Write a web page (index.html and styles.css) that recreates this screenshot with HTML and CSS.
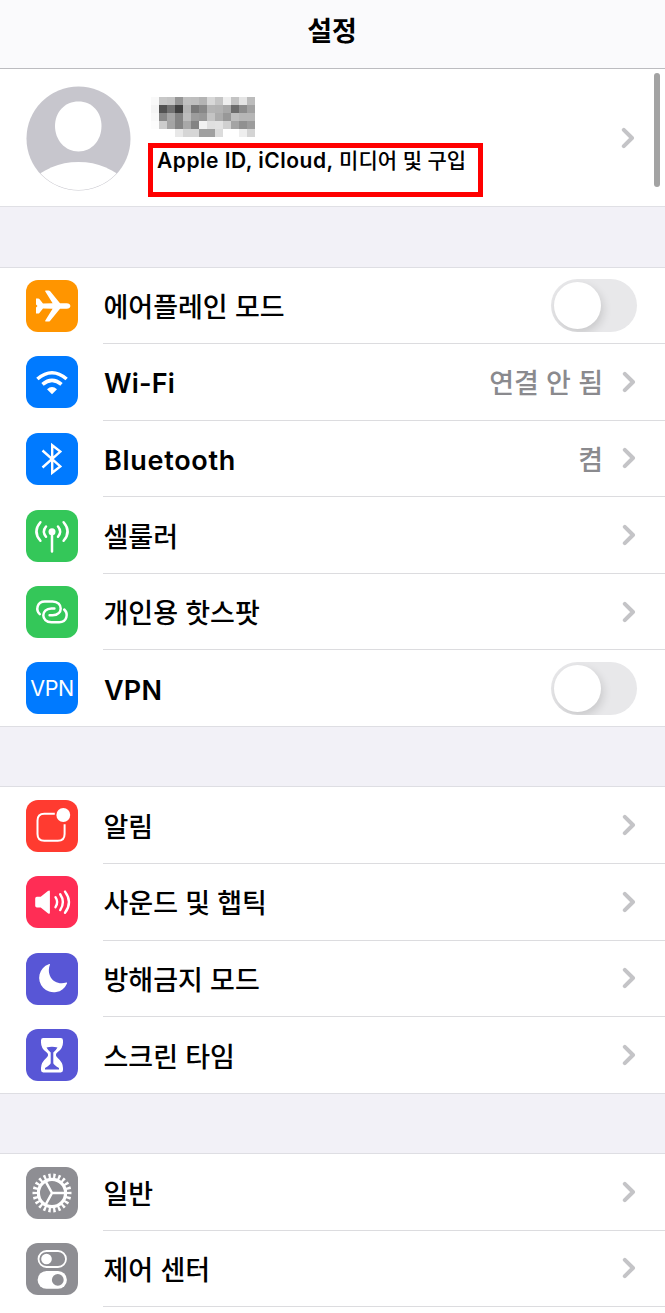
FILE: index.html
```
<!DOCTYPE html>
<html lang="ko">
<head>
<meta charset="utf-8">
<title>설정</title>
<link rel="stylesheet" href="styles.css">
</head>
<body>
<svg class="defs" width="0" height="0"><symbol id="chev" viewBox="0 0 14 22"><path d="M2.8 2.8 11 11 2.8 19.2"/></symbol></svg>
<header class="navbar"><h1>설정</h1></header>
<main>
<section class="profile">
  <svg class="avatar" viewBox="0 0 105 105"><defs><clipPath id="face"><circle cx="52.5" cy="52.5" r="51.5"/></clipPath></defs><circle cx="52.5" cy="52.5" r="52" fill="#c7c6cd"/><g fill="#fff" clip-path="url(#face)"><path d="M52.5 15.5C66 15.5 75.5 26 75.5 40S66 65.500 52.500 65.500 29 54 29 40 39 15.500 52.500 15.500Z"/><path d="M0 98C18 83 32 76 52.500 76S87 83 105 98V110H0Z"/></g></svg>
  <div class="identity">
    <svg class="mosaic" id="mosaic" viewBox="0 0 13 5" shape-rendering="crispEdges"></svg>
    <p class="subtitle"><span class="services">Apple ID, iCloud, </span>미디어 및 구입</p>
  </div>
  <svg class="chevron"><use href="#chev"/></svg>
</section>

<section class="group">
  <div class="row"><svg class="icon orange" viewBox="0 0 52 52"><path fill="#fff" d="M10 18.500h2.200c.5 0 .9.200 1.200.600l3.600 4.500 9.600-.4-7.300-11.700c-.3-.6 0-1.100.6-1.100h2.600c.7 0 1.200.3 1.700.9l9.800 11.900h6.700c2.200 0 3.700 1.300 3.700 2.800s-1.500 2.800-3.700 2.800H34l-9.800 11.900c-.5.600-1 .9-1.700.9h-2.600c-.6 0-.9-.5-.6-1.100l7.300-11.700-9.600-.4-3.600 4.500c-.3.400-.7.600-1.200.6H10v-5.900L11.500 26 10 24.400Z"/></svg><div class="cell"><span class="label">에어플레인 모드</span><span class="switch"><i></i></span></div></div>
  <div class="row"><svg class="icon blue" viewBox="0 0 52 52"><g fill="none" stroke="#fff"><path stroke-width="3.600" d="M11.400 23Q26 10.500 40.600 23"/><path stroke-width="3.600" d="M16.500 28.300Q26 20.300 35.500 28.300"/></g><path fill="#fff" d="M21 33.200Q26 29 31 33.200L26 38.300Z"/></svg><div class="cell"><span class="label latin">Wi-Fi</span><span class="value">연결 안 됨</span><svg class="chevron"><use href="#chev"/></svg></div></div>
  <div class="row"><svg class="icon blue" viewBox="0 0 52 52"><path fill="none" stroke="#fff" stroke-width="2.400" stroke-linejoin="miter" d="M16.500 17.500 34.300 33.400 26.200 39.800V12.200L34.300 18.600 16.500 34.500"/></svg><div class="cell"><span class="label latin wide">Bluetooth</span><span class="value">켬</span><svg class="chevron"><use href="#chev"/></svg></div></div>
  <div class="row"><svg class="icon green" viewBox="0 0 52 52"><circle cx="26" cy="21.700" r="3.500" fill="#fff"/><g fill="none" stroke="#fff" stroke-width="2.500" stroke-linecap="round"><path d="M26 23v18.500M20 16.500q-4.200 5 0 10.200M32 16.500q4.200 5 0 10.200M14.400 12.200q-8 9.300 0 18.500M37.600 12.200q8 9.300 0 18.500"/></g></svg><div class="cell"><span class="label">셀룰러</span><svg class="chevron"><use href="#chev"/></svg></div></div>
  <div class="row"><svg class="icon green" viewBox="0 0 52 52"><g fill="none" stroke="#fff" stroke-width="2.500" stroke-linecap="round"><path d="M13.800 28.200C9.500 24 10.800 15.500 18.800 15.500h7.800c10.800 0 10.800 13.800 0 13.800h-3"/><path d="M38.200 23.500C42.500 27.700 41.200 36.200 33.200 36.200h-7.800c-10.800 0-10.800-13.800 0-13.800h3"/></g></svg><div class="cell"><span class="label">개인용 핫스팟</span><svg class="chevron"><use href="#chev"/></svg></div></div>
  <div class="row"><span class="icon blue vpn">VPN</span><div class="cell"><span class="label latin">VPN</span><span class="switch"><i></i></span></div></div>
</section>

<section class="group">
  <div class="row"><svg class="icon red" viewBox="0 0 52 52"><path fill="none" stroke="#fff" stroke-width="2" d="M28.800 13.700H18.300q-6.800 0-6.800 6.800V34q0 6.800 6.800 6.800h13.500q6.800 0 6.800-6.800V24.200"/><circle cx="37.300" cy="15" r="6.900" fill="#fff"/></svg><div class="cell"><span class="label">알림</span><svg class="chevron"><use href="#chev"/></svg></div></div>
  <div class="row"><svg class="icon pink" viewBox="0 0 52 52"><path fill="#fff" d="M9.200 22.500q0-1.700 1.700-1.700h3.800L21.900 15q2-1.500 2 .8v20.600q0 2.300-2 .8l-7.200-5.800h-3.800q-1.700 0-1.700-1.700Z"/><g fill="none" stroke="#fff" stroke-width="2.400" stroke-linecap="round"><path d="M29.500 21.200q3.300 5 0 10M34.200 18.300q5.400 7.900 0 15.800M39 15.600q8 10.600 0 21.200"/></g></svg><div class="cell"><span class="label">사운드 및 햅틱</span><svg class="chevron"><use href="#chev"/></svg></div></div>
  <div class="row"><svg class="icon indigo" viewBox="0 0 52 52"><path fill="#fff" d="M24 11.400C20 21.500 27 33 40.300 29.600q1.200-.3.700.9A14.500 14.500 0 1 1 22.700 11.200Q24.300 10.500 24 11.400Z"/></svg><div class="cell"><span class="label">방해금지 모드</span><svg class="chevron"><use href="#chev"/></svg></div></div>
  <div class="row"><svg class="icon indigo" viewBox="0 0 52 52"><path fill="#fff" d="M17.200 9h17.600q2.200 0 2.200 2.400v2q0 6-5.500 9.900-3.200 2.700 0 5.400Q37 33.500 37 38.900v2.200q0 2.400-2.200 2.400H17.200Q15 43.500 15 41.100v-2.200q0-5.400 5.500-10.200 3.200-2.700 0-5.400Q15 19.400 15 13.400v-2Q15 9 17.200 9Z"/><path fill="#5856d6" d="M20.500 18.600q5.500-1.500 11 0-1 2.200-4.200 5v10.500q0 1.700 5.700 5v1.500H19v-1.500q5.700-3.300 5.700-5V23.600q-3.200-2.800-4.200-5Z"/></svg><div class="cell"><span class="label">스크린 타임</span><svg class="chevron"><use href="#chev"/></svg></div></div>
</section>

<section class="group">
  <div class="row"><svg class="icon gray" viewBox="0 0 52 52"><g fill="none" stroke="#fff"><circle cx="26" cy="26" r="13.600" stroke-width="3.200"/><circle cx="26" cy="26" r="17" stroke-width="5" pathLength="220" stroke-dasharray="4.800 5.200" stroke-dashoffset="2.400"/><path stroke-width="2.500" d="M26 26h13M26 26l-6.500-11.800M26 26l-6.500 11.800"/></g></svg><div class="cell"><span class="label">일반</span><svg class="chevron"><use href="#chev"/></svg></div></div>
  <div class="row"><svg class="icon gray" viewBox="0 0 52 52"><rect x="12.500" y="8" width="27.500" height="16" rx="8" fill="none" stroke="#fff" stroke-width="1.800"/><circle cx="20.500" cy="16" r="5.300" fill="#fff"/><rect x="11.600" y="28" width="29.300" height="17.800" rx="8.900" fill="#fff"/><circle cx="31.800" cy="36.900" r="5.900" fill="#8e8e93"/></svg><div class="cell last-line"><span class="label">제어 센터</span><svg class="chevron"><use href="#chev"/></svg></div></div>
</section>
</main>
<div class="scrollbar"></div>
<script src="mosaic.js"></script>
</body>
</html>
```
FILE: styles.css
```
* { box-sizing: border-box; }
body {
  margin: 0;
  width: 665px;
  height: 1313px;
  overflow: hidden;
  background: #fff;
  color: #000;
  font-family: Inter, "Noto Sans CJK KR", sans-serif;
  position: relative;
}
.defs { position: absolute; }
.navbar {
  height: 69px;
  border-bottom: 1px solid #bcbcc0;
  background: #fafafc;
  display: flex;
  justify-content: center;
  padding: 12px 1px 0 0;
}
.navbar h1 {
  margin: 0;
  font-size: 27px;
  line-height: 40px;
  font-weight: 700;
}
main { background: #f2f1f7; }
.profile {
  height: 138px;
  background: #fff;
  border-bottom: 1px solid #e0e0e5;
  display: flex;
  align-items: center;
  padding: 0 30px 0 26px;
}
.avatar { width: 105px; height: 105px; margin-top: 1px; }
.identity { align-self: flex-start; margin-left: 17px; padding-top: 28px; }
.mosaic { display: block; width: 104px; height: 40px; margin-left: 3px; }
.subtitle {
  margin: 6px 0 0;
  width: 335px;
  height: 54px;
  border: 5px solid #f00;
  padding-left: 4px;
  font-size: 21px;
  line-height: 26px;
  font-weight: 500;
  white-space: nowrap;
}
.services { font-weight: 600; letter-spacing: 0.5px; }
.chevron {
  width: 14px;
  height: 22px;
  flex: none;
  fill: none;
  stroke: #c4c4c7;
  stroke-width: 4;
  stroke-linecap: round;
  stroke-linejoin: round;
}
.profile .chevron { margin-left: auto; }
.group {
  margin-top: 59px;
  background: #fff;
  border-top: 1px solid #dedee3;
  border-bottom: 1px solid #dedee3;
}
.profile + .group { margin-top: 59.500px; }
.group:last-child { height: 160px; border-bottom: 0; }
.row { height: 76.600px; display: flex; align-items: center; padding-left: 26px; }
.row:last-child { height: 76px; }
.icon { width: 52px; height: 52px; border-radius: 12px; flex: none; }
.orange { background: #ff9500; }
.blue { background: #007aff; }
.green { background: #34c759; }
.red { background: #ff3b30; }
.pink { background: #ff2d55; }
.indigo { background: #5856d6; }
.gray { background: #8e8e93; }
.vpn {
  color: #fff;
  font-size: 21.500px;
  line-height: 53px;
  text-align: center;
  letter-spacing: -0.5px;
}
.cell {
  flex: 1;
  height: 100%;
  margin-left: 25px;
  padding-right: 28px;
  border-bottom: 1px solid #dcdcdf;
  display: flex;
  align-items: center;
}
.row:last-child .cell { border-bottom: 0; }
.row:last-child .last-line { border-bottom: 1px solid #dcdcdf; }
.label {
  padding: 5px 0 0 0.500px;
  font-size: 27px;
  font-weight: 500;
  line-height: 40px;
  white-space: nowrap;
}
.latin { font-weight: 600; padding-left: 1px; letter-spacing: 0.2px; }
.wide { letter-spacing: 0.7px; }
.value {
  margin-left: auto;
  margin-right: 19px;
  padding-top: 5px;
  font-size: 27px;
  font-weight: 500;
  line-height: 40px;
  color: #8a8a8e;
}
.cell .chevron { margin-right: 1px; }
.label + .chevron { margin-left: auto; }
.switch {
  width: 86px;
  height: 53px;
  border-radius: 27px;
  background: #e8e8ea;
  margin-left: auto;
  padding: 3px;
  overflow: hidden;
}
.switch i {
  display: block;
  width: 47px;
  height: 47px;
  border-radius: 50%;
  background: #fff;
  box-shadow: 2px 4px 10px rgba(0, 0, 0, 0.14);
}
.scrollbar {
  position: absolute;
  left: 654px;
  top: 73px;
  width: 6px;
  height: 114px;
  border-radius: 3px;
  background: #a3a3a3;
}
```
FILE: mosaic.js
```
// Grey levels of the pixelated name, one hex byte per block.
const rows = [
  'f9 c8 c4 96 c0 be b4 d8 c5 ee c4 e4 bc',
  'f4 52 72 40 b4 78 88 b4 b2 a8 6c 8c a2',
  'f8 88 a6 84 bc 9c 98 c4 ac 98 be b6 b6',
  'fc cc a4 84 a8 84 f2 e0 e2 d0 a4 90 9c',
  'ff ff ff e8 d6 d6 a0 a0 dc ff ff ee d4'
];
const svg = document.getElementById('mosaic');
rows.forEach((row, y) => row.split(' ').forEach((v, x) => {
  const r = document.createElementNS('http://www.w3.org/2000/svg', 'rect');
  r.setAttribute('x', x);
  r.setAttribute('y', y);
  r.setAttribute('width', 1);
  r.setAttribute('height', 1);
  r.setAttribute('fill', '#' + v + v + v);
  svg.appendChild(r);
}));
```
